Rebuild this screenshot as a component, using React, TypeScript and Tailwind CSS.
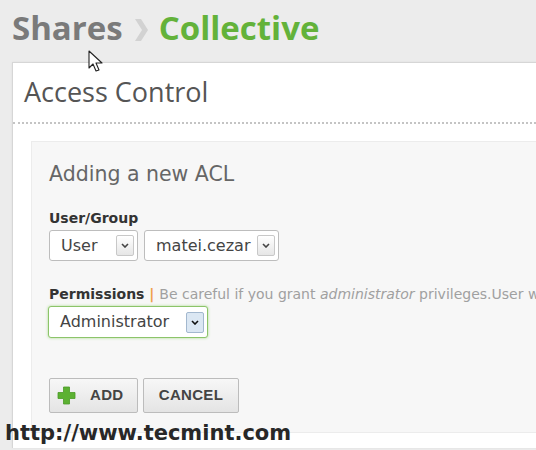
import React from "react";

const dv = { fontFamily: '"DejaVu Sans", Verdana, sans-serif' };

function Arrow({ active }: { active?: boolean }) {
  return (
    <span
      className={`flex h-[21px] w-[18px] items-center justify-center rounded-[2px] border ${
        active
          ? "border-[#a3b8cf] bg-[#dbe7f3]"
          : "border-[#c8c8c8] bg-gradient-to-b from-white to-[#e6e6e6]"
      }`}
    >
      <svg width="8" height="5" viewBox="0 0 8 5">
        <path d="M1 1 L4 4 L7 1" fill="none" stroke={active ? "#111" : "#444"} strokeWidth="1.6" />
      </svg>
    </span>
  );
}

function Select({ label, width, active }: { label: string; width: string; active?: boolean }) {
  return (
    <div
      className={`flex items-center justify-between rounded-[3px] border bg-white pl-[11px] pr-[3px] ${width} ${
        active
          ? "h-[32px] border-[#8cc46a] shadow-[0_0_3px_#a9d98c]"
          : "h-[31px] border-[#bdbdbd]"
      }`}
    >
      <span className="text-[16px] text-[#444]" style={dv}>
        {label}
      </span>
      <Arrow active={active} />
    </div>
  );
}

export default function App() {
  return (
    <div className="relative flex h-[450px] w-[536px] flex-col overflow-hidden bg-[#ececec]">
      {/* Breadcrumb */}
      <div
        className="flex h-[62px] shrink-0 items-center gap-[10px] pl-[12px] pb-[6px] text-[33px] font-bold"
        style={{ fontFamily: '"Open Sans", sans-serif' }}
      >
        <span className="text-[#7a7a7a]">Shares</span>
        <svg width="16" height="24" viewBox="0 0 16 24" className="mt-[4px]">
          <path d="M2 1 L8 1 L15 12 L8 23 L2 23 L9 12 Z" fill="#d2d2d2" />
        </svg>
        <span className="text-[#63b23a]">Collective</span>
      </div>

      {/* Panel */}
      <div className="ml-[12px] mb-[2px] flex w-[560px] flex-1 flex-col border-l border-t border-[#d6d6d6] bg-white pb-[15px] shadow-[0_0_2px_#ddd]">
        <div className="border-b-2 border-dotted border-[#c4c4c4] pl-[11px] pt-[10px] pb-[11px]">
          <h1
            className="text-[27px] leading-[38px] text-[#555]"
            style={{ fontFamily: '"Open Sans", sans-serif' }}
          >
            Access Control
          </h1>
        </div>

        <div className="ml-[18px] mt-[17px] flex flex-1 flex-col border border-[#ececec] bg-[#f7f7f7] pl-[17px] pt-[20px]">
          <h2 className="text-[20.5px] leading-[25px] text-[#666]" style={dv}>
            Adding a new ACL
          </h2>

          <div className="mt-[23px] text-[14px] font-bold leading-[16px] text-[#333]" style={dv}>
            User/Group
          </div>
          <div className="mt-[4px] flex gap-[6px]">
            <Select label="User" width="w-[89px]" />
            <Select label="matei.cezar" width="w-[135px]" />
          </div>

          <div className="mt-[25px] whitespace-nowrap text-[14px] leading-[16px]" style={dv}>
            <span className="font-bold text-[#333]">Permissions</span>
            <span className="font-bold text-[#f0a04b]"> | </span>
            <span className="text-[#a0a0a0]">
              Be careful if you grant <i>administrator</i> privileges.User will be able to do anything
            </span>
          </div>
          <div className="mt-[4px] -ml-[1px] flex">
            <Select label="Administrator" width="w-[160px]" active />
          </div>

          <div
            className="mt-[40px] flex gap-[5px] text-[15px] font-bold tracking-[0.3px] text-[#444]"
            style={{ fontFamily: '"Liberation Sans", Arial, sans-serif' }}
          >
            <button className="flex h-[35px] w-[89px] items-center rounded-[2px] border border-[#bcbcbc] bg-gradient-to-b from-[#f7f7f7] to-[#e4e4e4] pl-[7px]">
              <svg width="19" height="19" viewBox="0 0 19 19">
                <path
                  d="M6.5 1 H12.5 V6.5 H18 V12.5 H12.5 V18 H6.5 V12.5 H1 V6.5 H6.5 Z"
                  fill="#5cb132"
                  stroke="#4a9a26"
                  strokeWidth="0.8"
                  strokeLinejoin="round"
                />
              </svg>
              <span className="ml-[14px]">ADD</span>
            </button>
            <button className="flex h-[35px] w-[96px] items-center justify-center rounded-[2px] border border-[#bcbcbc] bg-gradient-to-b from-[#f7f7f7] to-[#e4e4e4]">
              CANCEL
            </button>
          </div>
        </div>
      </div>

      {/* Watermark */}
      <div
        className="absolute left-[5px] top-[418px] text-[21px] font-bold text-[#282828]"
        style={dv}
      >
        http://www.tecmint.com
      </div>

      {/* Mouse pointer */}
      <svg className="absolute left-[88px] top-[50px]" width="16" height="23" viewBox="0 0 16 23">
        <path
          d="M1 1 L1 18 L5 14 L8 21 L11 20 L8 13 L14 13 Z"
          fill="#fff"
          stroke="#222"
          strokeWidth="1.1"
          strokeLinejoin="round"
        />
      </svg>
    </div>
  );
}
